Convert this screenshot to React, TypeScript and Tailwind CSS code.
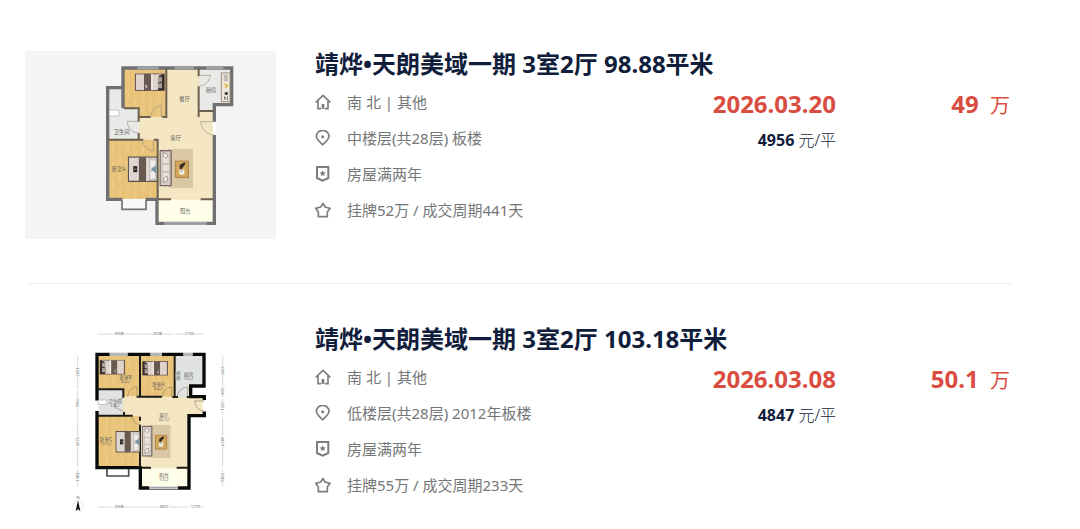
import type { ReactNode } from "react";

type IconName = "house" | "pin" | "badge" | "star";

interface Listing {
  title: string;
  href: string;
  details: { icon: IconName; text: string }[];
  date: string;
  dateTime: string;
  unitPrice: string;
  total: string;
  plan: ReactNode;
}

function RowIcon({ name }: { name: IconName }) {
  return (
    <svg
      viewBox="0 0 48 48"
      className="size-4 shrink-0"
      fill="none"
      stroke="#7b7e7e"
      strokeWidth="5"
      aria-hidden="true"
    >
      {name === "house" && (
        <>
          <path d="M2 25 24 4l22 21" />
          <path d="M9 20v24h9M39 20v24h-9" />
          <path d="M24 30v15" strokeWidth="8" />
        </>
      )}
      {name === "pin" && (
        <>
          <path d="M23 44C16 37 4 29 4 19a19 18 0 0 1 38 0c0 10-12 18-19 25z" />
          <circle cx="23" cy="20" r="4.500" fill="#7b7e7e" stroke="none" />
        </>
      )}
      {name === "badge" && (
        <>
          <path d="M6 3h34v33l-17 8-17-8z" strokeWidth="6" />
          <path
            d="m23 13 2.800 5.800 6.400.8-4.700 4.300 1.300 6.300-5.800-3.200-5.800 3.200 1.300-6.300-4.700-4.300 6.400-.8z"
            fill="#7b7e7e"
            stroke="none"
          />
        </>
      )}
      {name === "star" && (
        <path d="m24 4 6 11 15 4-8 11v14H10V30L2 19l15-4z" strokeLinejoin="round" />
      )}
    </svg>
  );
}

function Bed({ x, y, w, h }: { x: number; y: number; w: number; h: number }) {
  return (
    <svg x={x} y={y} width={w} height={h} viewBox="0 0 90 60" preserveAspectRatio="none">
      <rect width="90" height="60" fill="#5c524b" />
      <rect x="4" y="3" width="84" height="54" fill="#ded5d0" />
      <rect x="34" y="2" width="24" height="56" fill="#685a4f" />
      <path d="M58 2v56" stroke="#f3eeea" strokeWidth="3" />
      <path
        d="M67 4c7 8 17 4 19 1v22c-8-3-15 4-19-1zM67 33c6 4 14-3 19 1v21c-8-5-14 2-19-1z"
        fill="#f0eceb"
        stroke="#9b918c"
        strokeWidth="1.500"
      />
      <path d="m72 30 14-10v20z" fill="#7295a4" />
      <rect x="17" y="23" width="12" height="14" fill="#29241f" />
      <path d="M20 30h7" stroke="#d9d3cd" strokeWidth="2" />
    </svg>
  );
}

function DarkBed({ x, y, w, h, flip = false }: { x: number; y: number; w: number; h: number; flip?: boolean }) {
  return (
    <svg x={x} y={y} width={w} height={h} viewBox="0 0 90 52" preserveAspectRatio="none">
      <g transform={flip ? "matrix(-1 0 0 1 90 0)" : undefined}>
        <rect width="90" height="52" fill="#6b5a50" />
        <rect x="4" y="3" width="76" height="46" fill="#dfd3cc" />
        <rect x="28" y="2" width="21" height="48" fill="#685850" />
        <path d="M52 2v48" stroke="#f3eeea" strokeWidth="4" />
        <path d="M73 7 90 2v48H70V30z" fill="#352d2b" />
        <path d="M70 8c4 6 9 3 12 1v15l-12 4zM70 30l12-2v16H70z" fill="#aa9d98" />
        <path d="m31 34 6 5-4 5" fill="none" stroke="#e0d6cf" strokeWidth="3" />
      </g>
    </svg>
  );
}

function Lounge({ x, y, w, h }: { x: number; y: number; w: number; h: number }) {
  return (
    <svg x={x} y={y} width={w} height={h} viewBox="0 0 100 118" preserveAspectRatio="none">
      <rect x="26" width="74" height="118" fill="#dac7a6" />
      <rect y="3" width="37" height="110" rx="4" fill="#75675d" />
      <rect x="4" y="7" width="29" height="102" fill="#d8cbc4" />
      <path d="M9 22h21v22H9zM9 46h21v22H9zM9 70h21v22H9z" fill="#e9e1db" stroke="#a5978d" />
      <path d="m13 11 12 9-4 8-10-8zM15 86l9-3-1 14-12 4z" fill="#fff" stroke="#7c716a" strokeWidth="2" />
      <rect x="46" y="35" width="42" height="53" fill="#b18a4b" />
      <rect x="50" y="38" width="34" height="46" fill="#d4a95f" />
      <path d="m61 48 14-8 3 5-13 17-5-3z" fill="#342d2a" />
      <rect x="60" y="63" width="14" height="14" fill="#f3f4f0" />
      <path d="M62 67h8" stroke="#546a7b" strokeWidth="2" />
    </svg>
  );
}

function Room({ x, y, children, size = 16 }: { x: number; y: number; children: string; size?: number }) {
  return (
    <text x={x} y={y} textAnchor="middle" fontSize={size} fill="#62605c">
      {children}
    </text>
  );
}

function Grain({ id }: { id: string }) {
  return (
    <defs>
      <pattern id={id} width="46" height="54" patternUnits="userSpaceOnUse">
        <rect width="46" height="54" fill="#e9c47b" />
        <path d="M12 0v54M34 0v54" stroke="#e4bb6c" strokeWidth="2" />
        <path d="M23 3v31M2 25v28" stroke="#eecd8b" strokeWidth="4" />
      </pattern>
      <pattern id={`${id}-tile`} width="24" height="24" patternUnits="userSpaceOnUse">
        <rect width="24" height="24" fill="#f5e7c3" />
        <path d="M0 0h24M0 0v24" stroke="#f2e2ba" strokeWidth="2" />
      </pattern>
    </defs>
  );
}

function PlanOne() {
  return (
    <svg viewBox="15 18 753 564" className="w-full bg-[#f4f4f4]" role="img" aria-label="户型图">
      <Grain id="wood-one" />
      <path d="M310 70h329v112h-53v355H409v-73H262V128h48z" fill="url(#wood-one-tile)" />
      <path d="M310 72h128v144h-80v-27h-48z" fill="url(#wood-one)" />
      <path d="M264 284h149v179H264z" fill="url(#wood-one)" />
      <path d="M266 128h46v63h45v92h-91zM538 72h96v105h-52v20h-44z" fill="#e9e9e7" />
      <path d="M414 464h166v69H414z" fill="#fffee9" />
      <path d="M307 462h70v29h-70z" fill="#fafafa" />
      <path d="M306 466v27h72v-27" fill="none" stroke="#727277" strokeWidth="5" />
      <g fill="none" stroke="#707073" strokeWidth="10">
        <path d="M309 190V69h326v110h-52v51M583 270v265H411v-73M310 128h-47v335h44M377 463h35" />
      </g>
      <g fill="none" stroke="#6b5f52" strokeWidth="6">
        <path d="M312 190h44v40M358 216h34M427 216h12V72M356 264v20h-92M356 284h14M402 284h11v178M536 72v22M536 124v92M538 198h43M414 463h39M542 463h39" />
      </g>
      <path d="M352 69h64M465 69h57M559 69h51M433 535h127" stroke="#b0b3b6" strokeWidth="8" />
      <path d="M352 69h64M465 69h57M559 69h51M433 535h127" stroke="#7e8183" strokeWidth="2" />
      <g fill="none" stroke="#99958b" strokeWidth="2">
        <path d="M392 216c1-18 13-31 32-34v34M357 229h-36c2 20 15 34 36 35M366 284c3 19 14 32 34 34v-34M537 91h34c-3 18-14 31-34 33M581 230h-39c2 22 17 37 39 40" />
      </g>
      <path d="M583 231v37" stroke="#fff" strokeWidth="9" />
      <DarkBed x={344} y={85} w={90} h={53} />
      <Bed x={323} y={334} w={89} h={77} />
      <Lounge x={418} y={312} w={101} h={117} />
      <path d="M268 196h29v17h-29z" fill="#fff" stroke="#b7b7b4" strokeWidth="2" />
      <rect x="604" y="84" width="26" height="86" fill="#f0e8d8" stroke="#968f80" strokeWidth="3" />
      <rect x="611" y="89" width="13" height="20" fill="#c2bdb6" />
      <path d="m613 117 10 5-8 6" fill="none" stroke="#dbab35" strokeWidth="4" />
      <path d="M615 142h8v7h-8zM612 156h3v9M622 154v12" stroke="#77787b" strokeWidth="3" />
      <Room x={494} y={168}>餐厅</Room>
      <Room x={467} y={284}>客厅</Room>
      <Room x={574} y={141}>厨房</Room>
      <Room x={305} y={266}>卫生间</Room>
      <Room x={296} y={378}>卧室A</Room>
      <Room x={496} y={503}>阳台</Room>
    </svg>
  );
}

function PlanTwo() {
  return (
    <svg viewBox="-105 18 753 564" className="w-full" role="img" aria-label="户型图">
      <Grain id="wood-two" />
      <path d="M111 104h324v95h-46v30h45v59h-46v215H241v-62H111z" fill="url(#wood-two-tile)" />
      <path d="M112 105h128v124h-48v-21h-80zM243 105h101v125H243zM112 288h128v151H112z" fill="url(#wood-two)" />
      <path d="M114 210h75v76h-75zM347 107h83v90h-45v34h-38z" fill="#e1e3e3" />
      <path d="M245 445h137v55H245z" fill="#fffee9" />
      <path d="M141 443v25h65v-25" fill="#fff" stroke="#4c4c4c" strokeWidth="5" />
      <g fill="none" stroke="#080a09" strokeWidth="10">
        <path d="M111 242V103h321v95h-40v32h41v11M433 274v13h-46v217H241v-61H111V272M206 443h35" />
      </g>
      <g fill="none" stroke="#1d1b17" strokeWidth="6">
        <path d="M112 208h78v25M230 230h10V106M241 230h65M337 231h17M344 105v126M380 231h11M112 287h80v-11M192 287h26M240 290v12M240 314v128M244 443h29M350 443h34" />
      </g>
      <path d="M149 102h54M271 102h35M370 102h28M268 503h86" stroke="#f3f3f3" strokeWidth="10" />
      <path d="M149 102h54M271 102h35M370 102h28M268 503h86" stroke="#a0a4a6" strokeWidth="5" />
      <path d="M111 242v31M433 241v33" stroke="#fff" strokeWidth="10" />
      <g fill="none" stroke="#928469" strokeWidth="2">
        <path d="M203 231c2-17 11-28 28-31v31M306 231c2-17 12-28 29-30v30M352 229c3-16 14-27 31-28v28M190 234c-15 2-24 13-26 28l26 12M432 243h-28c2 17 11 27 28 31M216 289c3 15 10 24 25 26" />
      </g>
      <DarkBed x={119} y={119} w={76} h={45} flip />
      <DarkBed x={247} y={123} w={77} h={44} flip />
      <Bed x={166} y={333} w={74} h={65} />
      <Lounge x={245} y={315} w={87} h={99} />
      <path d="M114 240h27v13h-27z" fill="#fff" stroke="#aaa" strokeWidth="2" />
      <rect x="347" y="153" width="15" height="29" fill="#c9cecd" />
      <circle cx="355" cy="160" r="4" fill="none" stroke="#686e70" strokeWidth="2" />
      <circle cx="355" cy="174" r="4" fill="none" stroke="#686e70" strokeWidth="2" />
      <Room x={197} y={178} size={14}>卧室B</Room>
      <Room x={197} y={190} size={11}>8.2㎡</Room>
      <Room x={295} y={198} size={14}>卧室A</Room>
      <Room x={295} y={210} size={11}>8.4㎡</Room>
      <Room x={386} y={168} size={14}>厨房</Room>
      <Room x={386} y={180} size={11}>5.6㎡</Room>
      <Room x={165} y={248} size={14}>卫生间</Room>
      <Room x={165} y={260} size={11}>3.8㎡</Room>
      <Room x={138} y={364} size={14}>卧室C</Room>
      <Room x={138} y={376} size={11}>12.5㎡</Room>
      <Room x={312} y={292} size={14}>客厅</Room>
      <Room x={312} y={304} size={11}>24.7㎡</Room>
      <Room x={312} y={471} size={14}>阳台</Room>
      <Room x={312} y={483} size={11}>5.5㎡</Room>
      <g fill="none" stroke="#c4c4c4" strokeWidth="2">
        <path d="M113 42h48M193 42h48M244 42h33M307 42h34M347 42h28M400 42h31M113 561h48M193 561h48M244 561h53M327 561h56M387 561h4M421 561h10" />
        <path d="M53 107v36M53 169v37M53 212v21M53 263v22M53 291v59M53 380v58M53 446v12M53 486v12M488 107v31M488 167v31M488 204v2M488 222v9M488 237v5M488 274v11M488 293v56M488 379v59M488 446v12M488 488v12" />
      </g>
      <g fontSize="12" fill="#666" textAnchor="middle">
        <text x="177" y="46">3308</text>
        <text x="292" y="46">2508</text>
        <text x="388" y="46">2195</text>
        <text x="177" y="565">3308</text>
        <text x="312" y="565">3607</text>
        <text x="406" y="565">1279</text>
        <text transform="translate(57 156) rotate(-90)">2601</text>
        <text transform="translate(57 248) rotate(-90)">1950</text>
        <text transform="translate(57 365) rotate(-90)">4075</text>
        <text transform="translate(57 472) rotate(-90)">1383</text>
        <text transform="translate(492 152) rotate(-90)">2455</text>
        <text transform="translate(492 213) rotate(-90)">830</text>
        <text transform="translate(492 258) rotate(-90)">1200</text>
        <text transform="translate(492 364) rotate(-90)">4280</text>
        <text transform="translate(492 473) rotate(-90)">1383</text>
        <text x="54" y="536">N</text>
      </g>
      <circle cx="54" cy="558" r="16" fill="none" stroke="#e2e2e2" strokeWidth="2" />
      <path d="m54 541 7 32-7-5-7 5z" fill="#151515" />
    </svg>
  );
}

const listings: Listing[] = [
  {
    title: "靖烨•天朗美域一期 3室2厅 98.88平米",
    href: "#listing-1",
    details: [
      { icon: "house", text: "南 北 | 其他" },
      { icon: "pin", text: "中楼层(共28层) 板楼" },
      { icon: "badge", text: "房屋满两年" },
      { icon: "star", text: "挂牌52万 / 成交周期441天" },
    ],
    date: "2026.03.20",
    dateTime: "2026-03-20",
    unitPrice: "4956",
    total: "49",
    plan: <PlanOne />,
  },
  {
    title: "靖烨•天朗美域一期 3室2厅 103.18平米",
    href: "#listing-2",
    details: [
      { icon: "house", text: "南 北 | 其他" },
      { icon: "pin", text: "低楼层(共28层) 2012年板楼" },
      { icon: "badge", text: "房屋满两年" },
      { icon: "star", text: "挂牌55万 / 成交周期233天" },
    ],
    date: "2026.03.08",
    dateTime: "2026-03-08",
    unitPrice: "4847",
    total: "50.1",
    plan: <PlanTwo />,
  },
];

function ListingRow({ item }: { item: Listing }) {
  return (
    <article className="flex items-start">
      <a href={item.href} className="mr-[39px] flex w-[251px] shrink-0">
        {item.plan}
      </a>
      <div className="min-w-0 flex-1">
        <h2 className="text-2xl leading-[26px] font-bold text-[#101d3b]">
          <a href={item.href}>{item.title}</a>
        </h2>
        <div className="mt-[7px] grid grid-cols-[1fr_auto_174px] pr-[2px]">
          <ul className="text-[15px] leading-9 text-[#747777]">
            {item.details.map((detail) => (
              <li key={detail.icon} className="flex items-center gap-4">
                <RowIcon name={detail.icon} />
                <span>{detail.text}</span>
              </li>
            ))}
          </ul>
          <div className="pt-[2px] text-right leading-9">
            <time dateTime={item.dateTime} className="block text-2xl leading-9 font-bold text-[#d94d40]">
              {item.date}
            </time>
            <p className="text-base leading-9 font-light text-[#101d3b]">
              <b className="font-bold">{item.unitPrice}</b> 元/平
            </p>
          </div>
          <p className="pt-[2px] text-right text-xl leading-9 text-[#d94d40]">
            <b className="mr-[6px] text-2xl leading-9 font-bold">{item.total}</b> 万
          </p>
        </div>
      </div>
    </article>
  );
}

export default function App() {
  return (
    <main className="min-h-screen bg-white pt-[51px] pr-[68px] pl-[25px] font-['Noto_Sans','Noto_Sans_CJK_SC',sans-serif]">
      <ListingRow item={listings[0]} />
      <hr className="mt-11 mb-[42px] ml-[3px] border-t border-[#ededed]" />
      <ListingRow item={listings[1]} />
    </main>
  );
}
